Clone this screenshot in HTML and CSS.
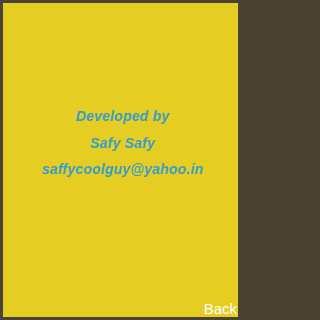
FILE: index.html
```html
<!DOCTYPE html>
<html>
<head>
<meta charset="utf-8">
<link rel="stylesheet" href="styles.css">
</head>
<body>
<div class="screen">
  <div class="credits">
    <div class="line">Developed by</div>
    <div class="line">Safy Safy</div>
    <div class="line">saffycoolguy@yahoo.in</div>
  </div>
  <div class="softkey">Back</div>
</div>
</body>
</html>
```
FILE: styles.css
```css
html, body {
  margin: 0;
  padding: 0;
  overflow: hidden;
  background: #4a4232;
}
.screen {
  position: relative;
  box-sizing: border-box;
  width: 240px;
  height: 320px;
  border: 3px solid #4a4232;
  border-right-width: 2px;
  background: #e6cd22;
  display: flex;
  flex-direction: column;
  align-items: center;
  font-family: "Liberation Sans", Arial, sans-serif;
}
.credits {
  margin-top: 105px;
  padding-left: 4px;
  display: flex;
  flex-direction: column;
  align-items: center;
  gap: 10px;
}
.line {
  color: #3a9fc6;
  font-weight: bold;
  font-style: italic;
  font-size: 14px;
  line-height: 16.5px;
  letter-spacing: 0.2px;
}
.softkey {
  position: absolute;
  right: 1px;
  bottom: 0;
  color: #ffffff;
  font-size: 15px;
  line-height: 17px;
}
```
